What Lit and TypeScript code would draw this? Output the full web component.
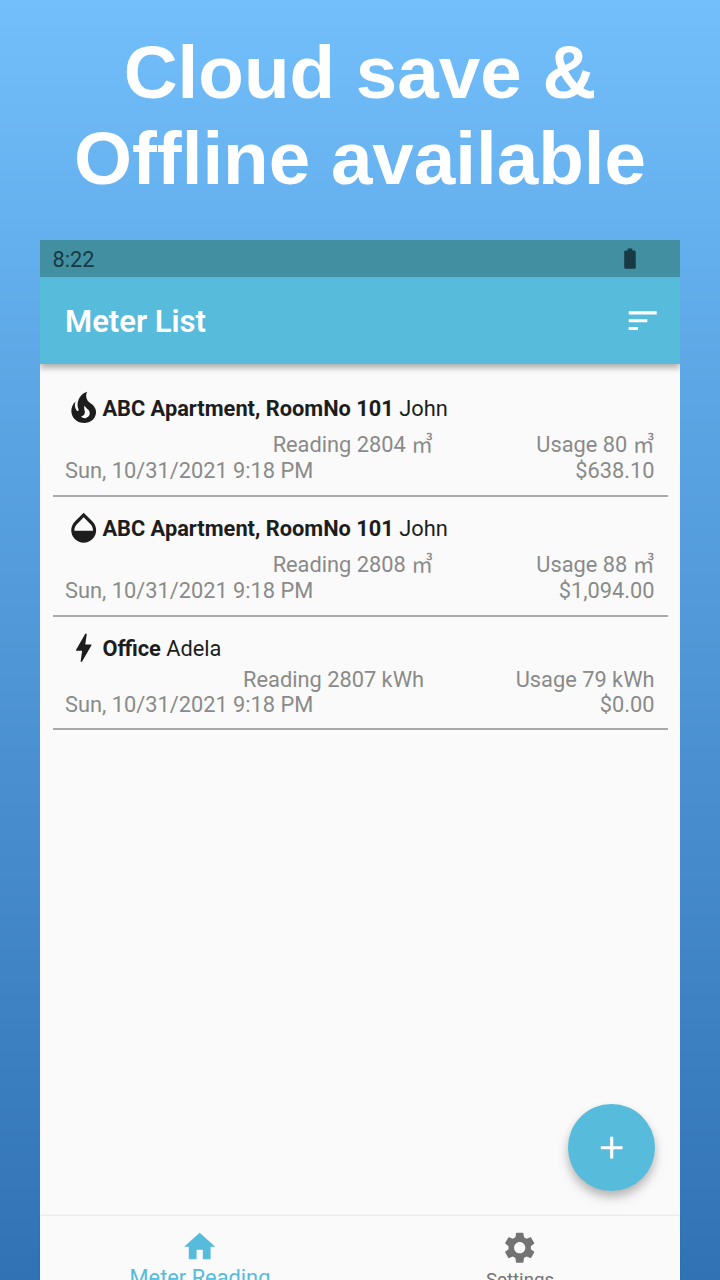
import { LitElement, html, css, svg } from "lit";
import { customElement, property } from "lit/decorators.js";

const ICONS: Record<string, string> = {
  fire: "M17.66 11.2c-.23-.3-.51-.56-.77-.82-.67-.6-1.43-1.03-2.07-1.66C13.33 7.26 13 4.85 13.95 3c-.95.23-1.78.75-2.49 1.32-2.59 2.08-3.61 5.75-2.39 8.9.04.1.08.2.08.33 0 .22-.15.42-.35.5-.23.1-.47.04-.66-.12a.58.58 0 0 1-.14-.17c-1.13-1.43-1.31-3.48-.55-5.12C5.78 10 4.87 12.3 5 14.47c.06.5.12 1 .29 1.5.14.6.41 1.2.71 1.73 1.08 1.73 2.95 2.97 4.96 3.22 2.14.27 4.43-.12 6.07-1.6 1.83-1.66 2.47-4.32 1.53-6.6l-.13-.26c-.21-.46-.77-1.26-.77-1.26m-3.16 6.3c-.28.24-.74.5-1.1.6-1.12.4-2.24-.16-2.9-.82 1.19-.28 1.9-1.16 2.11-2.05.17-.8-.15-1.46-.28-2.23-.12-.74-.1-1.37.17-2.06.19.38.39.76.63 1.06.77 1 1.98 1.44 2.24 2.8.04.14.06.28.06.43.03.82-.33 1.72-.93 2.27z",
  drop: "M17.66 8L12 2.35 6.34 8C4.78 9.56 4 11.64 4 13.64s.78 4.11 2.34 5.67 3.61 2.35 5.66 2.35 4.1-.79 5.66-2.35S20 15.64 20 13.64 19.22 9.56 17.66 8zM6 14c.01-2 .62-3.27 1.76-4.4L12 5.27l4.24 4.38C17.38 10.77 17.99 12 18 14H6z",
  bolt: "M11 21h-1l1-7H7.5c-.88 0-.33-.75-.31-.78C8.48 10.94 10.42 7.54 13.01 3h1l-1 7h3.51c.4 0 .62.19.4.66C12.97 17.55 11 21 11 21z",
  sort: "M3 18h6v-2H3v2zM3 6v2h18V6H3zm0 7h12v-2H3v2z",
  battery: "M15.67 4H14V2h-4v2H8.33C7.6 4 7 4.6 7 5.33v15.33C7 21.4 7.6 22 8.33 22h7.33c.74 0 1.34-.6 1.34-1.33V5.33C17 4.6 16.4 4 15.67 4z",
  add: "M19 13h-6v6h-2v-6H5v-2h6V5h2v6h6v2z",
  home: "M10 20v-6h4v6h5v-8h3L12 3 2 12h3v8z",
  settings: "M19.14 12.94c.04-.3.06-.61.06-.94 0-.32-.02-.64-.07-.94l2.03-1.58c.18-.14.23-.41.12-.61l-1.92-3.32c-.12-.22-.37-.29-.59-.22l-2.39.96c-.5-.38-1.03-.7-1.62-.94l-.36-2.54c-.04-.24-.24-.41-.48-.41h-3.84c-.24 0-.43.17-.47.41l-.36 2.54c-.59.24-1.13.57-1.62.94l-2.39-.96c-.22-.08-.47 0-.59.22L2.74 8.87c-.12.21-.08.47.12.61l2.03 1.58c-.05.3-.09.63-.09.94s.02.64.07.94l-2.03 1.58c-.18.14-.23.41-.12.61l1.92 3.32c.12.22.37.29.59.22l2.39-.96c.5.38 1.03.7 1.62.94l.36 2.54c.05.24.24.41.48.41h3.84c.24 0 .44-.17.47-.41l.36-2.54c.59-.24 1.13-.56 1.62-.94l2.39.96c.22.08.47 0 .59-.22l1.92-3.32c.12-.22.07-.47-.12-.61l-2.01-1.58zM12 15.6c-1.98 0-3.6-1.62-3.6-3.6s1.62-3.6 3.6-3.6 3.6 1.62 3.6 3.6-1.62 3.6-3.6 3.6z",
};

const VIEW_BOXES: Record<string, string> = {
  fire: "1.4 1.4 21.2 21.6",
  battery: "1.6 0.5 20.8 23.6",
};

const icon = (name: string) => html`<svg class="icon" viewBox=${VIEW_BOXES[name] ?? "0 0 24 24"} preserveAspectRatio="none">${svg`<path d=${ICONS[name]}></path>`}</svg>`;

interface Meter {
  icon: string;
  place: string;
  person: string;
  reading: string;
  usage: string;
  unit: string;
  date: string;
  price: string;
}

const METERS: Meter[] = [
  { icon: "fire", place: "ABC Apartment, RoomNo 101", person: "John", reading: "2804", usage: "80", unit: "㎥", date: "Sun, 10/31/2021 9:18 PM", price: "$638.10" },
  { icon: "drop", place: "ABC Apartment, RoomNo 101", person: "John", reading: "2808", usage: "88", unit: "㎥", date: "Sun, 10/31/2021 9:18 PM", price: "$1,094.00" },
  { icon: "bolt", place: "Office", person: "Adela", reading: "2807", usage: "79", unit: "kWh", date: "Sun, 10/31/2021 9:18 PM", price: "$0.00" },
];

@customElement("meter-row")
class MeterRow extends LitElement {
  @property({ attribute: false }) meter!: Meter;

  static styles = css`
    :host {
      display: block;
      margin: 0 12.5px;
      padding: 13px 13px 0 12.5px;
      border-bottom: 2px solid #a9a9a9;
      box-sizing: border-box;
      height: 120px;
    }
    :host(.compact) { height: 113.5px; }
    .title {
      display: flex;
      align-items: center;
      height: 37px;
      color: #1d1d1d;
      white-space: pre;
    }
    .icon { width: 37.4px; height: 37.4px; fill: currentColor; flex: none; }
    .values {
      display: grid;
      grid-template-columns: 368px 1fr;
      text-align: right;
      height: 27px;
      line-height: 27px;
      margin-top: 4px;
      color: #8a8a8a;
    }
    .foot {
      display: flex;
      justify-content: space-between;
      line-height: 26px;
      color: #8a8a8a;
    }
    :host(.compact) .values { grid-template-columns: 359px 1fr; height: 25px; line-height: 25px; margin-top: 0; }
  `;

  render() {
    const m = this.meter;
    return html`
      <div class="title">${icon(m.icon)}<span><b>${m.place}</b> ${m.person}</span></div>
      <div class="values"><span>Reading ${m.reading} ${m.unit}</span><span>Usage ${m.usage} ${m.unit}</span></div>
      <div class="foot"><span>${m.date}</span><span>${m.price}</span></div>
    `;
  }
}

@customElement("app-root")
class AppRoot extends LitElement {
  static styles = css`
    :host {
      display: flex;
      flex-direction: column;
      height: 1280px;
      overflow: hidden;
      background: linear-gradient(#73bffb, #63aeec 20%, #3172b4);
      font: 21.8px Roboto, "Noto Sans CJK JP", sans-serif;
    }
    .headline {
      margin: 0;
      padding-top: 29px;
      height: 211px;
      flex: none;
      text-align: center;
      color: #fff;
      font: bold 74.6px/86px "Liberation Sans", Arial, sans-serif;
    }
    .phone {
      display: flex;
      flex-direction: column;
      width: 640px;
      height: 1040px;
      margin: 0 auto;
      background: #fafafa;
    }
    .status {
      display: flex;
      justify-content: space-between;
      align-items: center;
      height: 37px;
      flex: none;
      padding: 0 38.5px 0 12.5px;
      background: #428fa2;
      color: #173a45;
    }
    .status span { padding-top: 2px; }
    .icon { fill: currentColor; width: 37.4px; height: 37.4px; flex: none; }
    .status .icon { width: 24px; height: 24px; }
    .bar {
      display: flex;
      justify-content: space-between;
      align-items: center;
      height: 87px;
      flex: none;
      padding: 0 18.5px 0 25px;
      background: #57bbdb;
      color: #fff;
      font-size: 31px;
      font-weight: 600;
      box-shadow: 0 4px 6px rgba(0, 0, 0, 0.3);
      clip-path: inset(0 0 -20px 0);
    }
    .bar span { padding-top: 2px; }
    .list { display: block; flex: 1; padding-top: 12.5px; }
    .dock { display: flex; justify-content: flex-end; padding: 0 25px 25px 0; }
    .fab {
      display: flex;
      align-items: center;
      justify-content: center;
      width: 87px;
      height: 87px;
      border: 0;
      padding: 0;
      border-radius: 50%;
      background: #57bbdb;
      color: #fff;
      box-shadow: 0 5px 8px rgba(0, 0, 0, 0.2), 0 8px 14px rgba(0, 0, 0, 0.1);
    }
    .tabs {
      display: grid;
      grid-template-columns: 1fr 1fr;
      height: 64px;
      flex: none;
      color: #737373;
      box-shadow: 0 -1px 2px rgba(0, 0, 0, 0.08);
    }
    .tab {
      display: flex;
      flex-direction: column;
      align-items: center;
      padding-top: 12.5px;
      font-size: 18.7px;
      line-height: 28px;
    }
    .active { color: #57bbdb; font-size: 21.8px; line-height: 26px; padding-top: 12px; }
  `;

  render() {
    return html`
      <h1 class="headline">Cloud save &amp;<br />Offline available</h1>
      <div class="phone">
        <div class="status"><span>8:22</span>${icon("battery")}</div>
        <header class="bar"><span>Meter List</span>${icon("sort")}</header>
        <main class="list">
          ${METERS.map((m) => html`<meter-row class=${m.unit === "kWh" ? "compact" : ""} .meter=${m}></meter-row>`)}
        </main>
        <div class="dock"><button class="fab" aria-label="Add">${icon("add")}</button></div>
        <nav class="tabs">
          <div class="tab active">${icon("home")}<span>Meter Reading</span></div>
          <div class="tab">${icon("settings")}<span>Settings</span></div>
        </nav>
      </div>
    `;
  }
}
